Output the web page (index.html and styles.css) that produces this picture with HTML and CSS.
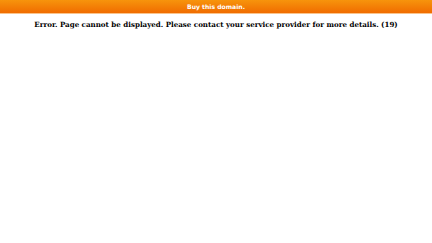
FILE: index.html
```html
<!DOCTYPE html>
<html>
<head>
<meta charset="utf-8">
<link rel="stylesheet" href="styles.css">
</head>
<body>
<div class="bar"><a class="buy" href="#">Buy this domain.</a></div>
<p class="error">Error. Page cannot be displayed. Please contact your service provider for more details. (19)</p>
</body>
</html>
```
FILE: styles.css
```css
html, body { margin: 0; padding: 0; background: #fff; }
.bar {
  height: 13px;
  background: linear-gradient(#f7940c, #f06c00);
  border-bottom: 1px solid #f9c48c;
  display: flex;
  align-items: center;
  justify-content: center;
}
.buy {
  font-family: "DejaVu Sans", sans-serif;
  font-weight: bold;
  font-size: 6.1px;
  color: #fff;
  text-decoration: none;
}
.error {
  margin: 6px 0 0;
  text-align: center;
  font-family: "DejaVu Serif", serif;
  font-weight: bold;
  font-size: 7.1px;
  line-height: 10px;
  color: #000;
}
```
